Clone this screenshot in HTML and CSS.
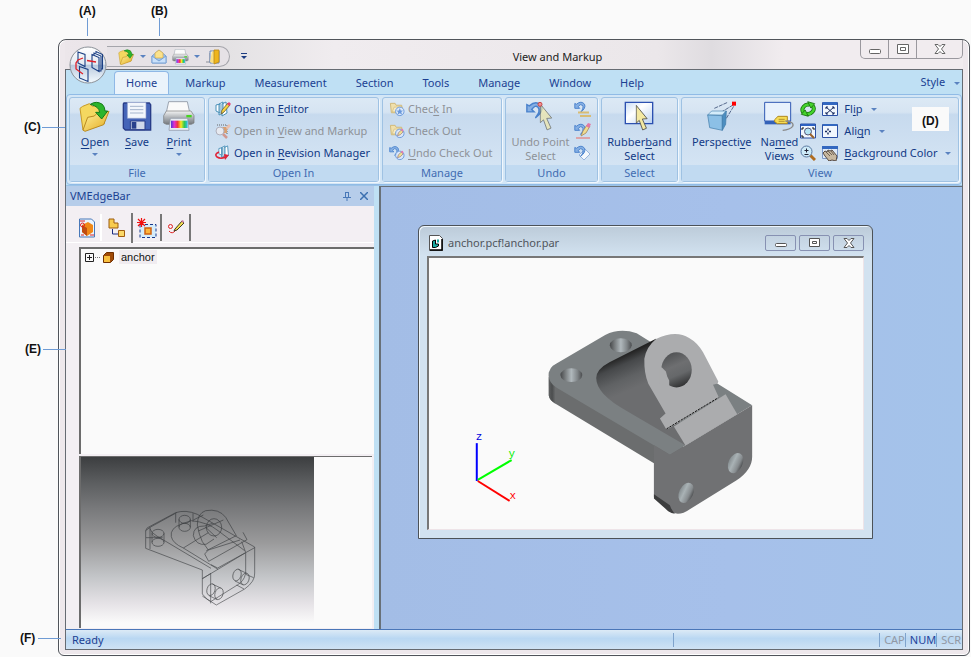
FILE: index.html
```html
<!DOCTYPE html>
<html lang="en">
<head>
<meta charset="utf-8">
<title>View and Markup</title>
<link rel="stylesheet" href="styles.css">
</head>
<body>
<svg class="defs" width="0" height="0" aria-hidden="true">
  <defs>
    <linearGradient id="gold" x1="0" y1="0" x2="1" y2="1"><stop offset="0" stop-color="#fff3a0"/><stop offset="1" stop-color="#e3a91c"/></linearGradient>
    <linearGradient id="rainbow"><stop offset="0" stop-color="#5038d8"/><stop offset=".2" stop-color="#e030d0"/><stop offset=".4" stop-color="#f03838"/><stop offset=".6" stop-color="#f8e820"/><stop offset=".8" stop-color="#30c850"/><stop offset="1" stop-color="#30b8f0"/></linearGradient>
    <linearGradient id="silver" x1="0" y1="0" x2="0" y2="1"><stop offset="0" stop-color="#f4f4f4"/><stop offset=".45" stop-color="#b4b8bc"/><stop offset="1" stop-color="#74797e"/></linearGradient>
    <symbol id="i-folder" viewBox="0 0 96 93">
      <path d="M3 22l8-6 20-8 10 8 28-6 7 18v40L12 88z" fill="#f5d860" stroke="#c79a28" stroke-width="3"/>
      <path d="M12 87l14-38 20-4 8-8 36-6-16 40-56 20z" fill="url(#gold)" stroke="#b98a20" stroke-width="3"/>
      <path d="M34 10Q52-2 70 10q8 8 8 20h8L68 54 50 34h12Q60 16 34 10z" fill="#2cb52c" stroke="#137a1a" stroke-width="3"/>
    </symbol>
    <symbol id="i-printer" viewBox="0 0 96 93">
      <path d="M17 2h56l7 32H10z" fill="#fafafa" stroke="#9ca4b0" stroke-width="3"/>
      <path d="M10 30h74l9 14v22l-8 4H10l-8-4V44z" fill="url(#silver)" stroke="#777" stroke-width="2"/>
      <rect x="70" y="42" width="16" height="7" fill="#45d520"/>
      <path d="M22 52h52l4 36H18z" fill="#e8ecf2" stroke="#8890a0" stroke-width="2"/>
      <rect x="24" y="59" width="50" height="22" fill="url(#rainbow)"/>
    </symbol>
    <symbol id="i-undo" viewBox="0 0 16 16">
      <path d="M1 3v6h6L5 7q3-4 5-2 3 3-2 9 7-5 5-10-4-5-10 0z" fill="#86b0e4" stroke="#4a82cc" stroke-width="1.200"/>
    </symbol>
    <symbol id="i-cursor" viewBox="0 0 36 78">
      <path d="M2 2v52l9-8 10 28 11-5-12-27 14-1z" fill="#f4e9a2" stroke="#4e4e48" stroke-width="2.500"/>
    </symbol>
    <symbol id="i-minifolder" viewBox="0 0 16 16">
      <path d="M1 2h5l1 2h6v8H2z" fill="#f0e0ac" stroke="#d0b878" stroke-width="1"/><path d="M3 11l2-5h9l-2 5z" fill="#f7ecc8" stroke="#d0b878" stroke-width=".7"/>
    </symbol>
    <symbol id="i-pages" viewBox="0 0 16 16">
      <path d="M1 4l4-1v9l-4-2zM4 3l4-2v11l-4 2zM7 3l4-2 1 11-5 3z" fill="#fff" stroke="#4a90b8" stroke-width="1"/>
    </symbol>
    <linearGradient id="bore"><stop offset="0" stop-color="#46484a"/><stop offset=".22" stop-color="#777b7d"/><stop offset=".5" stop-color="#b0b8bc"/><stop offset=".78" stop-color="#808588"/><stop offset="1" stop-color="#4b4d4f"/></linearGradient>
    <linearGradient id="bore-front"><stop offset="0" stop-color="#858d90"/><stop offset=".35" stop-color="#a9b2b5"/><stop offset=".75" stop-color="#868b8e"/><stop offset="1" stop-color="#505254"/></linearGradient>
    <linearGradient id="tube" gradientUnits="userSpaceOnUse" x1="280" y1="118" x2="322" y2="215"><stop offset="0" stop-color="#222"/><stop offset=".25" stop-color="#46484a"/><stop offset=".65" stop-color="#606264"/><stop offset="1" stop-color="#6c6d6f"/></linearGradient>
    <linearGradient id="eye" gradientUnits="userSpaceOnUse" x1="415" y1="110" x2="460" y2="215"><stop offset="0" stop-color="#4d4f51"/><stop offset=".4" stop-color="#6e6f71"/><stop offset=".65" stop-color="#66686a"/><stop offset="1" stop-color="#2c2d2e"/></linearGradient>
    <linearGradient id="corner"><stop offset="0" stop-color="#5f6162"/><stop offset=".5" stop-color="#4b4d4e"/><stop offset="1" stop-color="#6b6d6e"/></linearGradient>
  </defs>
</svg>
<div class="figure">
  <div class="window">
    <header class="titlebar">
      <button class="orb" aria-label="Application menu">
        <svg width="38" height="38" viewBox="0 0 38 38">
          <defs><linearGradient id="glass" x1="0" y1="0" x2="0" y2="1"><stop offset="0" stop-color="#fff"/><stop offset=".48" stop-color="#e4eaf1"/><stop offset=".5" stop-color="#b9c9dd"/><stop offset="1" stop-color="#f4fbff"/></linearGradient></defs>
          <circle cx="19" cy="19" r="18" fill="url(#glass)" stroke="#8a9097"/>
          <path d="M9 6l7 2.500v12L9 17zM10.500 20.500l8.500 3v12l-8.500-3.500zM23 8.500l7 3v14l-7-4zM25 9V7l7 3v15h-2M27 7V5.500l6.500 3V23H32" fill="none" stroke="#1a3f84" stroke-width="1.100"/>
          <path d="M14 12L9 14l-2 3v6l7 5M18 14.500l9 1.500" fill="none" stroke="#e02028" stroke-width="1.300"/>
        </svg>
      </button>
      <nav class="qat" aria-label="Quick access">
        <button aria-label="Open"><svg width="17" height="16"><use href="#i-folder"/></svg></button>
        <span class="arrow"></span>
        <button aria-label="Send"><svg width="16" height="16" viewBox="0 0 16 16"><path d="M1 7l7-6 7 6v7H1z" fill="#9cc4f0" stroke="#7aa2d4"/><path d="M4 4l4-3 4 3v5H4z" fill="#fbe28c" stroke="#d8b050" stroke-width=".8"/><path d="M1 7l7 5 7-5v7H1z" fill="#c8e0fa" stroke="#7aa2d4"/></svg></button>
        <button aria-label="Print"><svg width="17" height="16"><use href="#i-printer"/></svg></button>
        <span class="arrow"></span>
        <button aria-label="Exit"><svg width="16" height="16" viewBox="0 0 16 16"><path d="M1 13h4V4" fill="none" stroke="#8c9098"/><path d="M5 2h9v12H5z" fill="#eef4fb" stroke="#6c86b0"/><path d="M7 2l-2 11 5 2V4z" fill="#fbe080"/><path d="M9 1h5v12l-5 2z" fill="#eeb51c" stroke="#b88818" stroke-width=".8"/></svg></button>
      </nav>
      <button class="more" aria-label="Customize quick access"><i></i><span class="arrow dark"></span></button>
      <h1>View and Markup</h1>
      <div class="controls">
        <button aria-label="Minimize"><svg width="14" height="12" viewBox="0 0 14 12"><rect x="1.500" y="6.500" width="11" height="4" rx="1" fill="#fff" stroke="#666"/></svg></button>
        <button aria-label="Maximize"><svg width="14" height="12" viewBox="0 0 14 12"><path d="M1.500 1.500h11v9h-11zM4.500 4.500h5v3h-5z" fill="#fff" stroke="#666"/></svg></button>
        <button class="wide" aria-label="Close"><svg width="14" height="12" viewBox="0 0 14 12"><path d="M2 1.500h3l2 2 2-2h3L8.500 6l3.500 4.500H9l-2-2-2 2H2L5.500 6z" fill="#fff" stroke="#666"/></svg></button>
      </div>
    </header>
    <div class="client">
      <nav class="tabs">
        <button class="on">Home</button><button>Markup</button><button>Measurement</button><button>Section</button><button>Tools</button><button>Manage</button><button>Window</button><button>Help</button>
        <button class="style">Style <span class="arrow"></span></button>
      </nav>
      <div class="ribbon">
        <section class="group g-file">
          <div class="tools">
            <button class="big"><svg width="32" height="31"><use href="#i-folder"/></svg><span><u>O</u>pen</span><span class="arrow"></span></button>
            <button class="big"><svg width="30" height="31" viewBox="0 0 90 93"><path d="M6 6h76l4 5v76H10l-6-6V9z" fill="#4464b8" stroke="#283c88" stroke-width="4"/><path d="M16 4h56v48H16z" fill="#f2f6fc" stroke="#8898c8" stroke-width="2"/><path d="M24 16h40M24 26h40M24 36h40" stroke="#a4b4cc" stroke-width="3"/><path d="M25 60h44v26H25z" fill="#cfd8ea" stroke="#283c88" stroke-width="3"/><path d="M29 63h14v20H29z" fill="#28408c"/></svg><span><u>S</u>ave</span></button>
            <button class="big"><svg width="32" height="31"><use href="#i-printer"/></svg><span><u>P</u>rint</span><span class="arrow"></span></button>
          </div>
          <h2>File</h2>
        </section>
        <section class="group g-openin">
          <div class="tools list">
            <button><svg width="16" height="16" viewBox="0 0 16 16"><use href="#i-pages"/><path d="M6 13l1-4 6-7 2 2-6 7z" fill="#f8d440" stroke="#6a5a30" stroke-width=".8"/><path d="M12 3l2-2 2 2-2 2z" fill="#e84070"/></svg><span>Open in <u>E</u>ditor</span></button>
            <button disabled><svg width="16" height="16" viewBox="0 0 16 16"><path d="M2 2h10v9" fill="none" stroke="#666" stroke-dasharray="1 1"/><path d="M5 4h7v6H6z" fill="#d8a070"/><path d="M11 4l3-3 2 2-4 4z" fill="#e8c0b0"/><circle cx="5" cy="8" r="4" fill="#e6e9f0" stroke="#b0b0bc"/><path d="M8 11l4 4" stroke="#d09890" stroke-width="2.500"/></svg><span>Open in <u>V</u>iew and Markup</span></button>
            <button><svg width="16" height="16" viewBox="0 0 16 16"><g transform="translate(3 0)"><use href="#i-pages" width="14" height="14"/></g><path d="M4 7Q-1 9 2 12q4 2.500 8 0" fill="none" stroke="#e02438" stroke-width="1.600"/><path d="M9 9l5 1-4 5z" fill="#e02438"/></svg><span>Open in <u>R</u>evision Manager</span></button>
          </div>
          <h2>Open In</h2>
        </section>
        <section class="group g-manage">
          <div class="tools list">
            <button disabled><svg width="16" height="16" viewBox="0 0 17 16"><use href="#i-minifolder"/><circle cx="11.500" cy="10.500" r="4.500" fill="#dce8f8" stroke="#6898dc"/><path d="M11.500 7l1 2.500 2.500.3-2 1.500 1 2.700-2.500-1.500L9 14l.8-2.700-2-1.500 2.700-.3z" fill="#6898dc"/></svg><span>Chec<u>k</u> In</span></button>
            <button disabled><svg width="16" height="16" viewBox="0 0 17 16"><use href="#i-minifolder"/><circle cx="11.500" cy="10.500" r="4.500" fill="#dce8f8" stroke="#6898dc"/><path d="M9 13l1-3 3-3 2 2-3 3z" fill="#f0e090" stroke="#907080" stroke-width=".7"/><path d="M12.500 6.500l2-1 1 2-1 1z" fill="#e878b0"/></svg><span>Check Out</span></button>
            <button disabled><svg width="16" height="16" viewBox="0 0 17 16"><svg width="12" height="12"><use href="#i-undo"/></svg><circle cx="11.500" cy="10.500" r="4.500" fill="#dce8f8" stroke="#6898dc"/><path d="M9 13l1-3 3-3 2 2-3 3z" fill="#f0e090" stroke="#907080" stroke-width=".7"/><path d="M12.500 6.500l2-1 1 2-1 1z" fill="#e878b0"/></svg><span><u>U</u>ndo Check Out</span></button>
          </div>
          <h2>Manage</h2>
        </section>
        <section class="group g-undo">
          <div class="tools">
            <button class="big" disabled><svg width="30" height="31" viewBox="0 0 90 93"><svg width="58" height="58" x="2"><use href="#i-undo"/></svg><svg x="43" y="7" width="40" height="84" opacity=".65"><use href="#i-cursor"/></svg><circle cx="45" cy="10" r="6" fill="#f09090" stroke="#c84848" stroke-width="3"/></svg><span>Undo Point<br>Select</span></button>
            <div class="icons">
              <button aria-label="Undo all" disabled><svg width="18" height="16" viewBox="0 0 18 16"><svg width="13" height="13"><use href="#i-undo"/></svg><path d="M4 11.500h11M6 15h11" stroke="#d8bc74" stroke-width="2"/></svg></button>
              <button aria-label="Undo markup" disabled><svg width="18" height="16" viewBox="0 0 18 16"><svg width="13" height="13"><use href="#i-undo"/></svg><path d="M7 13l2-5 4-6 3 1-4 7z" fill="#f0dc90" stroke="#a48858" stroke-width=".8"/><path d="M12 3l2-3 3 1-2 4z" fill="#e478a4"/><path d="M2 15h14" stroke="#e09090" stroke-width="1.500"/></svg></button>
              <button aria-label="Undo view" disabled><svg width="18" height="16" viewBox="0 0 18 16"><path d="M11 4l5 5-6 6-5-5z" fill="#f4f8fc" stroke="#98b4dc"/><svg width="13" height="13"><use href="#i-undo"/></svg></svg></button>
            </div>
          </div>
          <h2>Undo</h2>
        </section>
        <section class="group g-select">
          <div class="tools">
            <button class="big"><svg width="30" height="31" viewBox="0 0 90 93"><defs><linearGradient id="screen" x2="1" y2="1"><stop offset="0" stop-color="#c8dcf4"/><stop offset=".4" stop-color="#fff"/><stop offset="1" stop-color="#b8d0f0"/></linearGradient></defs><path d="M4 4h82v64H4z" fill="url(#screen)" stroke="#2c50b0" stroke-width="4"/><svg x="34" y="11" width="38" height="80"><use href="#i-cursor"/></svg></svg><span>Rubber<u>b</u>and<br>Select</span></button>
          </div>
          <h2>Select</h2>
        </section>
        <section class="group g-view">
          <div class="tools">
            <button class="big"><svg width="30" height="31" viewBox="0 0 90 93"><path d="M22 22l40-18M42 34l36-22M58 52l22-36" stroke="#3c5078" stroke-width="2.500" stroke-dasharray="12 3"/><path d="M2 42l12-12h44L46 42z" fill="#d4ecfa" stroke="#4a86b4" stroke-width="2"/><path d="M2 42l44 2v44L8 80z" fill="#8cc0e6" stroke="#3c78a8" stroke-width="2"/><path d="M46 44l12-14-2 40-10 18z" fill="#4c8ec0" stroke="#3c78a8" stroke-width="2"/><path d="M75 2h12v12H75z" fill="#f00"/></svg><span>Perspecti<u>v</u>e</span></button>
            <button class="big"><svg width="30" height="31" viewBox="0 0 90 93"><path d="M2 4h78v56H2z" fill="#e8f1fc" stroke="#3058b4" stroke-width="3"/><path d="M2 60h78v10H2z" fill="#3462b8"/><path d="M32 56l10-10h28v22H40l-8-6z" fill="#f6dc54" stroke="#b08820" stroke-width="3"/><path d="M44 55h18M44 61h18" stroke="#907020" stroke-width="2"/><path d="M64 60q28 2 22 16-8 10-30 12" fill="none" stroke="#888" stroke-width="4"/></svg><span>Na<u>m</u>ed<br>Views</span></button>
            <div class="icons">
              <button aria-label="Rotate"><svg width="16" height="16" viewBox="0 0 16 16"><g transform="rotate(-18 8 8)" fill="none"><path d="M2.500 10A5.500 5 0 0 1 11 4.500M13.500 6.500A5.500 5 0 0 1 5 12" stroke="#187010" stroke-width="4"/><path d="M2.500 10A5.500 5 0 0 1 11 4.500M13.500 6.500A5.500 5 0 0 1 5 12" stroke="#44d42c" stroke-width="2.400"/><path d="M10 1l6 4-5 3zM6 15l-6-4 5-3z" fill="#44d42c" stroke="#187010" stroke-width=".8"/></g></svg></button>
              <button aria-label="Fit"><svg width="16" height="16" viewBox="0 0 16 16"><path d="M.5 1h15v14H.5z" fill="#f2f7fd" stroke="#2c50a4"/><path d="M1 1h14v2H1z" fill="#2c60c0"/><path d="M2 7V5h2M12 5h2v2M2 12v2h2" fill="none" stroke="#111"/><circle cx="8" cy="8.500" r="3.500" fill="#b4e4f4" stroke="#557"/><path d="M10 11l4 4" stroke="#9a6028" stroke-width="2"/></svg></button>
              <button aria-label="Zoom"><svg width="16" height="16" viewBox="0 0 16 16"><path d="M9 9l6 6" stroke="#b06c20" stroke-width="3"/><circle cx="6.500" cy="6.500" r="5.500" fill="#cdeaf8" stroke="#5878a0"/><path d="M4.500 5.500h4M6.500 3.500v4M4.500 9.500h4" stroke="#223"/></svg></button>
            </div>
            <div class="list">
              <button><svg width="16" height="16" viewBox="0 0 16 16"><path d="M.5 1.500h15v13H.5z" fill="#f2f7fd" stroke="#2c50a4"/><path d="M1 1h14v3H1z" fill="#3468c0"/><path d="M4 6l8 7M12 6l-8 7M4 8V6h2M10 6h2v2M12 11v2h-2M6 13H4v-2" fill="none" stroke="#16285c"/></svg><span>Fl<u>i</u>p</span><span class="arrow"></span></button>
              <button><svg width="16" height="16" viewBox="0 0 16 16"><path d="M.5 1.500h15v13H.5z" fill="#f2f7fd" stroke="#2c50a4"/><path d="M1 1h14v2H1z" fill="#3468c0"/><path d="M3 8.500h2M7 8.500h2M6 5.500v2M6 9.500v2" stroke="#16285c" stroke-width="1.400"/></svg><span>Ali<u>g</u>n</span><span class="arrow"></span></button>
              <button><svg width="16" height="16" viewBox="0 0 16 16"><path d="M.5 1.500h15v12H.5z" fill="#dfeaf8" stroke="#7c98c8"/><path d="M0 1h16v3H0z" fill="#3468c0"/><path d="M1 8l2-2 2 1 1-2 2 1 2-1 5 6-1 5-4-1-3 1-4-5z" fill="#c8b8a0" stroke="#584c44"/><path d="M4 7l4 4M6 6l4 4M9 6l3 4" stroke="#584c44" stroke-width=".8"/></svg><span><u>B</u>ackground Color</span><span class="arrow"></span></button>
            </div>
          </div>
          <h2>View</h2>
        </section>
      </div>
      <main class="work">
        <aside class="edgebar">
          <div class="barhead"><span>VMEdgeBar</span>
            <button aria-label="Pin"><svg width="8" height="9" viewBox="0 0 8 9"><path d="M2.500 0v5M5.500 0v5M2 .5h4M0 5.500h8M4 6v3" fill="none" stroke="#4878b8"/></svg></button>
            <button aria-label="Close panel"><svg width="8" height="8" viewBox="0 0 8 8"><path d="M0 0l8 8M8 0L0 8" stroke="#3c70b0" stroke-width="1.500"/></svg></button>
          </div>
          <div class="bartabs">
            <button aria-label="Markup files"><svg width="18" height="20" viewBox="0 0 18 20"><path d="M1.500 1h12l3 3v15h-15z" fill="#eaf4ff" stroke="#4878b8"/><path d="M4 7l6-3 5 3v7l-6 4-5-4z" fill="#f08818"/><path d="M4 7l5 3v8l-5-4z" fill="#c04c10"/><path d="M2 3h5M12 17h4M3 17h3" stroke="#e02020"/><circle cx="4.500" cy="7" r="2" fill="none" stroke="#e02020"/></svg></button>
            <button class="on" aria-label="Structure"><svg width="18" height="20" viewBox="0 0 18 20"><path d="M1 1h5v4h4v5H1z" fill="#f8cc50" stroke="#9c5c10"/><path d="M4.500 11v5H10" fill="none" stroke="#1c2c80"/><path d="M10.500 12.500h6v6h-6z" fill="#fbd868" stroke="#a05c10"/></svg></button>
            <button aria-label="Selection"><svg width="20" height="20" viewBox="0 0 20 20"><path d="M3 6.500h16v13H3z" fill="#d4ecfb" stroke="#18388c" stroke-dasharray="3 2"/><path d="M8 10h6v6H8z" fill="#fbb43c" stroke="#d06010" stroke-width="1.500"/><path d="M0 4.500h9M4.500 0v9M1 1l7 7M8 1L1 8" stroke="#f01010" stroke-width="1.200"/></svg></button>
            <button aria-label="Markup"><svg width="18" height="20" viewBox="0 0 18 20"><circle cx="3.500" cy="8.500" r="2" fill="none" stroke="#e02020"/><path d="M2 13q3 4 7-1" fill="none" stroke="#e02020"/><path d="M8 11l7-8 2 2-7 7-3 1z" fill="#f4e050" stroke="#403820"/><path d="M14 3l2-1 1 2-1 1z" fill="#c878a0"/></svg></button>
          </div>
          <div class="tree">
            <button class="node" aria-expanded="false"><svg width="30" height="11" viewBox="0 0 30 11"><path d="M.5 1.500h8v8h-8zM2 5.500h5M4.500 3v5" fill="none" stroke="#222"/><path d="M10 5.500h6" stroke="#777" stroke-dasharray="1 1"/><path d="M18.500 3.500l3-3h7v7l-3 3h-7z" fill="#a04c08" stroke="#703000"/><path d="M19 4h6v6h-6z" fill="#f8c040"/></svg><span>anchor</span></button>
          </div>
          <div class="preview">
            <svg viewBox="63 51 699 513" role="img" aria-label="Wireframe preview">
              <g fill="none" stroke="#2b2e30" stroke-width="2" opacity=".8">
                <path d="M257 325V272q2-10 15-14l75-40q30-10 65 5l172 98v78q2 25-30 48l-85 48-28-18-14-15v-72z"/>
                <path d="M257 272l13-10v65M270 266q2 12 22 23l161 96M427 416l130-78 27-15M452 400v90M557 338v65l24 10M453 374l20 10 84-46M427 416l26-16M556 403q-4 20-24 32l-80 50-25-17M530 435l22 12"/>
                <path d="M347 220v28M399 220v25M270 262l80-44M334 290q-5-25 30-38l30-10q50 5 80 30l80 60M334 290q4 20 36 34l104 64M370 324l75-46M400 240l30-15"/>
                <path d="M412 255q0-35 25-43 40-7 60 20l32 55-90 45M412 255q5 30 15 50l18 25-11 12 12 22 115-65-12-22M445 330l95-30M545 305l12 32"/>
                <ellipse cx="462" cy="262" rx="23" ry="26"/><path d="M400 287q0-30 33-29l25-8M400 287q8 30 38 26l24-16M415 273l75-33M435 260l35 33"/>
                <ellipse cx="374" cy="238" rx="17" ry="12"/><ellipse cx="374" cy="262" rx="17" ry="12"/><path d="M357 238v24M391 238v24"/>
                <ellipse cx="294" cy="280" rx="18" ry="12"/><ellipse cx="294" cy="307" rx="18" ry="12"/><path d="M276 280v27M312 280v27M258 293h50"/>
                <ellipse cx="531" cy="405" rx="12" ry="18" transform="rotate(18 531 405)"/><ellipse cx="555" cy="417" rx="12" ry="18" transform="rotate(18 555 417)"/><path d="M535 388l25 12M525 423l25 12"/>
                <ellipse cx="453" cy="449" rx="12" ry="18" transform="rotate(18 453 449)"/><ellipse cx="477" cy="461" rx="12" ry="18" transform="rotate(18 477 461)"/><path d="M457 432l25 12M447 467l25 12"/>
              </g>
            </svg>
          </div>
        </aside>
        <div class="mdi">
          <article class="child">
            <div class="childbar">
              <svg width="14" height="16" viewBox="0 0 14 16"><path d="M.5.5h10l3 3v12H.5z" fill="#fff" stroke="#555"/><path d="M13 4v11H1" fill="none" stroke="#000" stroke-width="1.500"/><path d="M3.500 6l3-1v4h3v2l-3 1.500h-3z" fill="#18a8a0" stroke="#000"/><path d="M8 4.500h2v3H8z" fill="#18a8a0"/></svg>
              <h3>anchor.pcf!anchor.par</h3>
              <button aria-label="Minimize document"><svg width="12" height="10" viewBox="0 0 12 10"><rect x=".5" y="5.500" width="11" height="3" rx="1" fill="#fff" stroke="#555"/></svg></button>
              <button aria-label="Maximize document"><svg width="12" height="10" viewBox="0 0 12 10"><path d="M.5 .5h10v8H.5zM3.500 3.500h4v2h-4z" fill="#fff" stroke="#555"/></svg></button>
              <button aria-label="Close document"><svg width="12" height="10" viewBox="0 0 12 10"><path d="M1 .5h3l2 2 2-2h3L7.500 5l3.500 4.500H8l-2-2-2 2H1L4.500 5z" fill="#fff" stroke="#555"/></svg></button>
            </div>
            <svg class="scene" viewBox="428 257 436 272" role="img" aria-label="Anchor part">
              <g transform="translate(530 315) scale(.3333)">
                <path d="M55 170v70q2 15 18 24l299 181v103l48 42 80-150-70-80z" fill="#6b6d6e"/>
                <path d="M55 185v55q2 15 20 25v-55z" fill="url(#corner)"/>
                <path d="M55 180q0-25 22-35L225 58q45-22 95-5l348 217-248 149L80 218q-25-15-25-38z" fill="#7b8082"/>
                <path d="M420 419l248-149v155q0 40-48 72l-140 86q-35 25-60 5l-48-40V390z" fill="#707173"/>
                <path d="M372 538l48 33q5 15 15 26-10-2-20-8l-43-38z" fill="#3c3d3e"/>
                <path d="M198 188q0-27 40-48L378 69l90 322-48-28-130-76q-92-50-92-99z" fill="url(#tube)"/>
                <path d="M343 130q5-35 35-60 60-28 100-3 25 14 42 43l46 88-2 6-14 4 18 39-153 94-6 1-19-32 17-15-52-90q-13-30-12-75z" fill="#abacae"/>
                <ellipse cx="440" cy="163" rx="46" ry="53" fill="url(#eye)"/>
                <path d="M388 156h8l12 12 4 15 6 12v22l-30-15z" fill="#abacae"/>
                <path d="M432 334l156-97 35 60-156 94z" fill="#abacae"/>
                <path d="M410 341l156-94" stroke="#111" stroke-width="3" stroke-dasharray="7 3"/>
                <ellipse cx="123" cy="179" rx="33" ry="21" fill="url(#bore)"/>
                <ellipse cx="272" cy="89" rx="33" ry="21" fill="url(#bore)"/>
                <ellipse cx="618" cy="444" rx="21" ry="32" transform="rotate(25 618 444)" fill="url(#bore-front)"/>
                <ellipse cx="469" cy="534" rx="21" ry="32" transform="rotate(25 469 534)" fill="url(#bore-front)"/>
              </g>
              <g fill="none" stroke-width="2"><path d="M476 481v-38" stroke="#00f"/><path d="M477 480l34-20" stroke="#0f0"/><path d="M477 481l32 20" stroke="#f00"/></g>
              <g class="axis"><text x="475" y="440" fill="#00d">z</text><text x="508" y="457" fill="#0e0">y</text><text x="509" y="499" fill="#f00">x</text></g>
            </svg>
          </article>
        </div>
      </main>
      <footer class="status"><span class="ready">Ready</span><span class="cell blank"></span><span class="cell">CAP</span><span class="cell lit">NUM</span><span class="cell">SCR</span></footer>
    </div>
  </div>
  <div class="note a">(A)</div>
  <div class="note b">(B)</div>
  <div class="note c">(C)</div>
  <div class="note d">(D)</div>
  <div class="note e">(E)</div>
  <div class="note f">(F)</div>
</div>
</body>
</html>
```
FILE: styles.css
```css
* { box-sizing: border-box; }
body { margin: 0; background: #fafafa; color: #1b3f92; font: 11px/14px "Noto Sans", "Open Sans", sans-serif; }
button { margin: 0; padding: 0; border: 0; background: none; color: inherit; font: inherit; white-space: nowrap; }
button:disabled { color: #8e9298; }
h1, h2, h3 { margin: 0; font-size: inherit; font-weight: normal; }
svg { display: block; flex: none; }
.defs { position: absolute; }
u { text-underline-offset: 2px; }

.figure { position: relative; display: flex; min-height: 100vh; padding: 39px 1px 1px 58px; }
.window { flex: 1; min-width: 0; display: flex; flex-direction: column; padding: 0 6px 5px; border: 1px solid #50545a; border-radius: 8px 8px 6px 6px; background: #eee8ec; box-shadow: inset 0 0 0 1px #fff; }

.titlebar { position: relative; display: flex; align-items: flex-start; height: 29px; padding-left: 42px; background: linear-gradient(90deg, #ece6ea 0, #e4e2e4 18%, #f0ecef 30%, #ebe7ea 66%, #dfdce0 72%, #f1ecef 80%); }
.orb { position: absolute; left: 4px; top: 6px; z-index: 2; }
.qat { display: flex; align-items: center; gap: 5px; height: 21px; margin-top: 6px; padding: 0 8px 0 11px; border: 1px solid #a5a5ab; border-left: 0; border-radius: 0 11px 11px 0; background: #e6e2e6; }
.more { display: flex; flex-direction: column; align-items: center; gap: 2px; margin: 13px 0 0 11px; }
.more i { width: 6px; height: 1px; background: #1c3c80; }
.arrow { display: inline-block; width: 0; border: 3px solid transparent; border-top-color: #5a82c0; border-bottom: 0; vertical-align: middle; }
.arrow.dark { border-top-color: #1c3c80; }
.titlebar h1 { flex: 1; padding: 10px 0 0 8px; color: #222; text-align: center; }
.controls { display: flex; border: 1px solid #9a989e; border-top: 0; border-radius: 0 0 5px 5px; }
.controls button { display: flex; align-items: center; justify-content: center; width: 28px; height: 18px; border-right: 1px solid #9a989e; }
.controls .wide { width: 45px; border: 0; }

.client { flex: 1; display: flex; flex-direction: column; border: 1px solid #666b72; background: #bfe0f4; }
.tabs { display: flex; gap: 8px; height: 24px; padding: 0 2px 0 48px; }
.tabs button { height: 24px; padding: 2px 10px 0 11px; }
.tabs .on { margin: 1px -3px 0 0; height: 23px; border: 1px solid #8fb8e6; border-bottom: 0; border-radius: 4px 4px 0 0; padding: 0 11px; background: #eaf3fb; }
.tabs .style { margin-left: auto; padding: 0; }
.style .arrow { margin-left: 6px; }

.ribbon { display: flex; gap: 3px; padding: 2px; border: 1px solid #90bbe6; border-radius: 4px; background: #d3e6f6; }
.group { display: flex; flex-direction: column; border: 1px solid #9fc2e3; border-radius: 3px; background: linear-gradient(#dce9f5 0, #d6e4f2 17%, #c7daee 20%, #d8e7f5 100%); box-shadow: 1px 1px 0 #f1f7fd; }
.group h2 { height: 16px; background: #c1daf1; color: #416cb2; text-align: center; line-height: 15px; }
.tools { display: flex; justify-content: center; height: 67px; color: #123a86; }
.g-file { width: 136px; }
.g-openin { width: 171px; }
.g-manage { width: 120px; }
.g-undo { width: 93px; }
.g-select { width: 77px; }
.g-view { flex: 1; }
.big { display: flex; flex-direction: column; align-items: center; padding-top: 3px; line-height: 14px; }
.big svg { margin-bottom: 3px; }
.big .arrow { margin-top: 4px; }
.g-file .big { width: 42px; }
.tools.list { display: block; }
.list { padding-left: 6px; }
.list button { display: flex; align-items: center; gap: 3px; height: 22px; }
.icons { margin-left: 4px; }
.icons button { display: flex; align-items: center; height: 22px; }
.g-view .tools { justify-content: flex-start; padding-left: 10px; }
.g-view .big + .big { margin-left: 9px; }
.g-view .icons { margin-left: 2px; }
.g-view .list button { gap: 6px; }
.list .arrow { margin-left: 2px; }

.work { flex: 1; display: grid; grid-template-columns: 308px 1fr; column-gap: 5px; border-top: 1px solid #9cc3e6; }
.edgebar { display: flex; flex-direction: column; background: #f3eff3; }
.barhead { display: flex; align-items: center; gap: 9px; height: 20px; padding: 0 6px 0 4px; background: #b6cdea; }
.barhead span { flex: 1; }
.bartabs { display: flex; align-items: center; height: 37px; padding: 7px 7px 0; border-bottom: 1px solid #fff; margin-bottom: 4px; }
.bartabs button { display: flex; align-items: center; justify-content: center; width: 29px; height: 27px; border-right: 2px solid #777; }
.bartabs button:first-child { border-color: #fff; }
.bartabs .on { width: 31px; height: 30px; }
.tree { flex: 1; min-height: 120px; margin-left: 13px; padding: 1px 4px; border: solid #6c6c6c; border-width: 2px 0 0 2px; background: #fafafa; }
.node { display: flex; align-items: center; gap: 4px; color: #111; font: 11px/14px "Liberation Sans", sans-serif; }
.node span { padding: 0 2px; background: #f0ecf0; }
.preview { height: 172px; margin: 2px 2px 1px 13px; border: solid #6c6c6c; border-width: 1px 0 0 2px; background: #fafafa; }
.preview svg { width: 233px; height: 171px; background: linear-gradient(#3c3e40 0, #5c5e60 15%, #78797b 30%, #9a9a9b 50%, #c3c5c8 70%, #e6e3e7 86%, #fafafa 97%); }

.mdi { position: relative; border: solid #687078; border-width: 1px 0 0 2px; background: linear-gradient(90deg, #a3bde6, #a6c0ea 60%, #a4c3ea); }
.child { position: absolute; left: 37px; top: 38px; width: 455px; padding: 0 8px 8px; border: 1px solid #4c5258; border-radius: 6px 6px 0 0; background: linear-gradient(#bccbd9 0, #d2e2f0 30px); box-shadow: inset 1px 1px 0 #eef6fc; }
.childbar { display: flex; align-items: center; gap: 3px; height: 30px; padding: 4px 0 0 2px; color: #50555c; }
.childbar h3 { flex: 1; padding-left: 2px; }
.childbar button { display: flex; align-items: center; justify-content: center; width: 31px; height: 16px; border: 1px solid #8791b2; border-radius: 2px; }
.scene { width: 100%; border: solid #777; border-width: 2px 1px 1px 2px; border-right-color: #eee4e8; border-bottom-color: #eee4e8; background: #fafafa; }
.axis { font: 11px "Liberation Mono", monospace; }

.status { display: flex; align-items: center; height: 20px; padding-right: 1px; border-top: 1px solid #4a76b8; background: linear-gradient(#dceaf6, #b9d7f2 45%, #cfe2f4); }
.ready { flex: 1; padding-left: 6px; }
.cell { padding-left: 4px; border-left: 1px solid #7fa3cc; color: #9298a4; }
.cell.blank { width: 206px; height: 14px; }
.cell.lit { color: #24449c; }

.note { position: absolute; color: #111; font: bold 12px/14px "Liberation Sans", sans-serif; }
.note::after { content: ""; position: absolute; background: #6f9bd4; }
.a { left: 79px; top: 4px; }
.b { left: 151px; top: 4px; }
.a::after, .b::after { left: 8px; top: 14px; width: 1px; height: 18px; }
.c { left: 24px; top: 120px; }
.e { left: 25px; top: 342px; }
.f { left: 20px; top: 631px; }
.c::after, .e::after, .f::after { left: 18px; top: 7px; width: 23px; height: 1px; }
.d { left: 912px; top: 107px; width: 37px; padding: 7px 10px 3px; background: #fafafa; }
```
